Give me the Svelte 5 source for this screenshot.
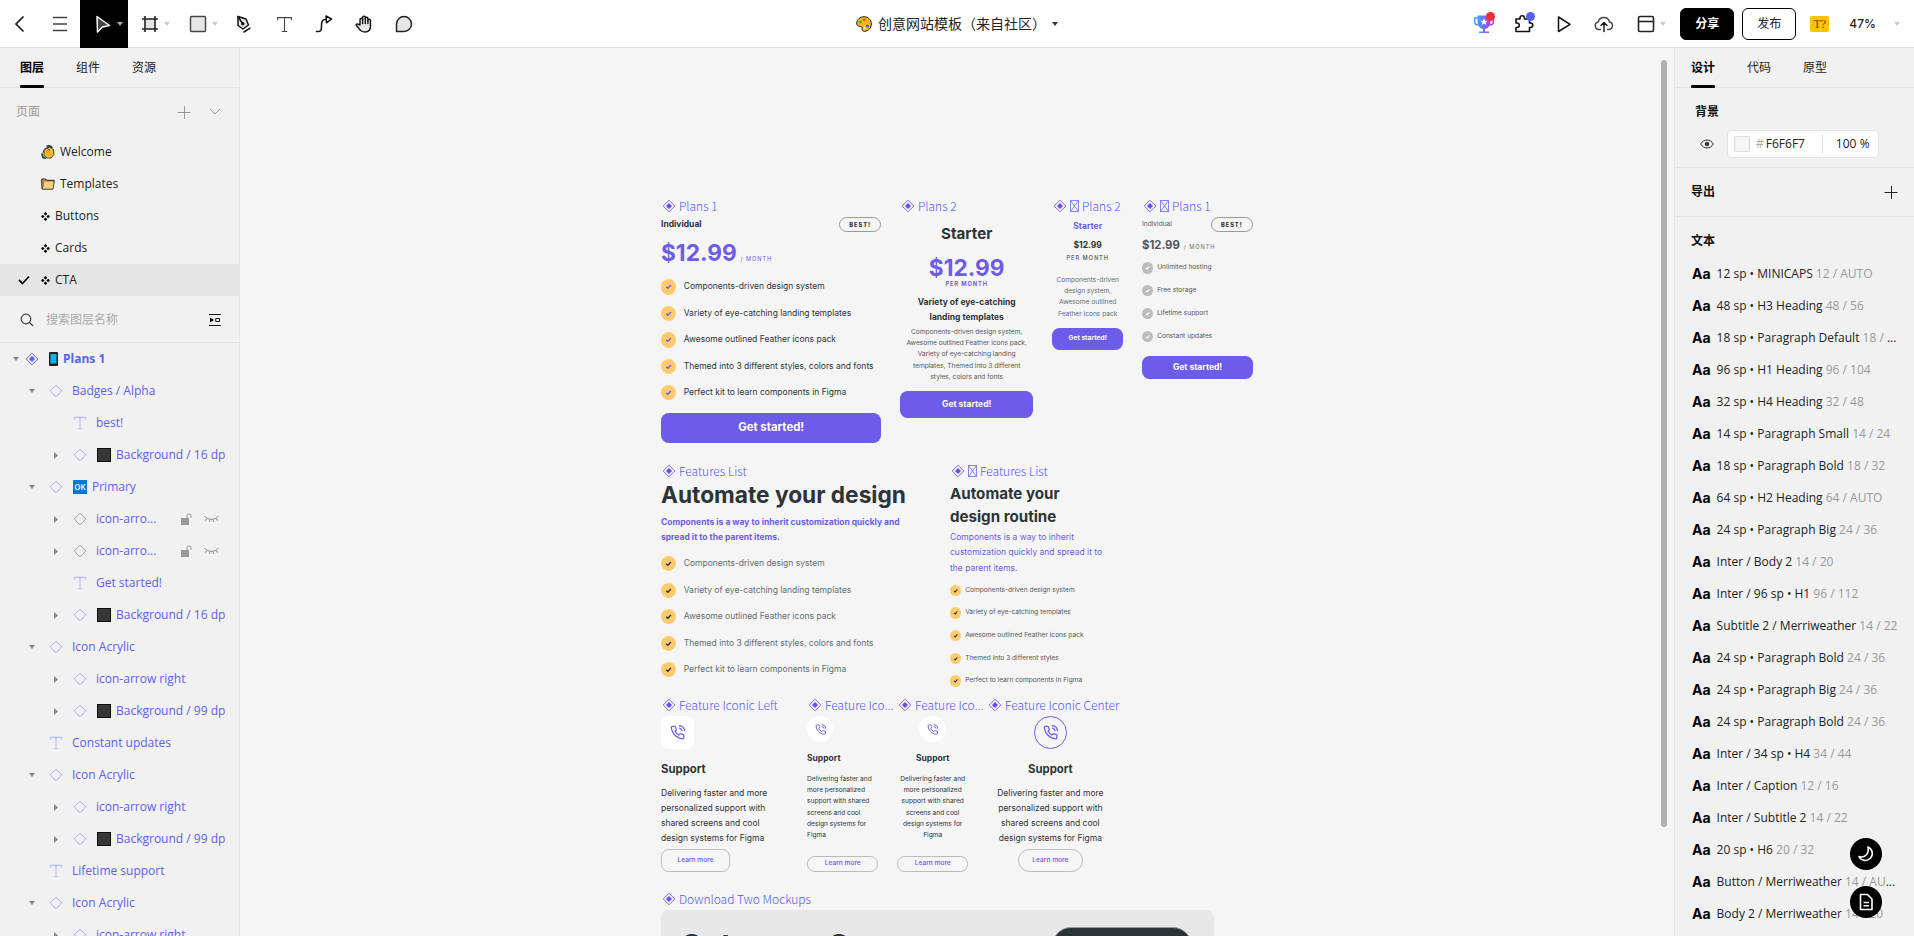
<script>
  const pages = [
    { icon: 'wave', name: 'Welcome' },
    { icon: 'folder', name: 'Templates' },
    { icon: 'four', name: 'Buttons' },
    { icon: 'four', name: 'Cards' },
    { icon: 'four', name: 'CTA', active: true }
  ];

  const acrylic = [
    { level: 1, kind: 'instance', open: true, name: 'Icon Acrylic' },
    { level: 2, kind: 'instance', open: false, name: 'icon-arrow right' },
    { level: 2, kind: 'instance', open: false, badge: 'square', name: 'Background / 99 dp' }
  ];

  const layers = [
    { level: 0, kind: 'component', open: true, badge: 'phone', name: 'Plans 1' },
    { level: 1, kind: 'instance', open: true, name: 'Badges / Alpha' },
    { level: 2, kind: 'text', name: 'best!' },
    { level: 2, kind: 'instance', open: false, badge: 'square', name: 'Background / 16 dp' },
    { level: 1, kind: 'instance', open: true, badge: 'ok', name: 'Primary' },
    { level: 2, kind: 'instance', open: false, name: 'icon-arro...', hidden: true },
    { level: 2, kind: 'instance', open: false, name: 'icon-arro...', hidden: true },
    { level: 2, kind: 'text', name: 'Get started!' },
    { level: 2, kind: 'instance', open: false, badge: 'square', name: 'Background / 16 dp' },
    ...acrylic,
    { level: 1, kind: 'text', name: 'Constant updates' },
    ...acrylic,
    { level: 1, kind: 'text', name: 'Lifetime support' },
    ...acrylic.slice(0, 2)
  ];

  const styles = [
    ['12 sp • MINICAPS', '12 / AUTO'],
    ['48 sp • H3 Heading', '48 / 56'],
    ['18 sp • Paragraph Default', '18 / ', true],
    ['96 sp • H1 Heading', '96 / 104'],
    ['32 sp • H4 Heading', '32 / 48'],
    ['14 sp • Paragraph Small', '14 / 24'],
    ['18 sp • Paragraph Bold', '18 / 32'],
    ['64 sp • H2 Heading', '64 / AUTO'],
    ['24 sp • Paragraph Big', '24 / 36'],
    ['Inter / Body 2', '14 / 20'],
    ['Inter / 96 sp • H1', '96 / 112'],
    ['Subtitle 2 / Merriweather', '14 / 22'],
    ['24 sp • Paragraph Bold', '24 / 36'],
    ['24 sp • Paragraph Big', '24 / 36'],
    ['24 sp • Paragraph Bold', '24 / 36'],
    ['Inter / 34 sp • H4', '34 / 44'],
    ['Inter / Caption', '12 / 16'],
    ['Inter / Subtitle 2', '14 / 22'],
    ['20 sp • H6', '20 / 32'],
    ['Button / Merriweather', '14 / AU', true],
    ['Body 2 / Merriweather', '14 / 20']
  ];

  const features = [
    'Components-driven design system',
    'Variety of eye-catching landing templates',
    'Awesome outlined Feather icons pack',
    'Themed into 3 different styles, colors and fonts',
    'Perfect kit to learn components in Figma'
  ];
  const shortFeatures = [
    'Components-driven design system',
    'Variety of eye-catching templates',
    'Awesome outlined Feather icons pack',
    'Themed into 3 different styles',
    'Perfect to learn components in Figma'
  ];
  const perks = ['Unlimited hosting', 'Free storage', 'Lifetime support', 'Constant updates'];
  const pitch = 'Delivering faster and more personalized support with shared screens and cool design systems for Figma';

  let query = $state('');
  let hex = $state('F6F6F7');
  let opacity = $state('100');
</script>

{#snippet caret(cls)}
  <svg class="caret {cls}" width="6" height="4" viewBox="0 0 6 4" aria-hidden="true"><path d="M0 0h6L3 4z" fill="currentColor" /></svg>
{/snippet}

{#snippet diamond(filled)}
  <svg width="14" height="14" viewBox="0 0 14 14" fill="none" stroke="currentColor" aria-hidden="true">
    <path d="M7 1.2 12.8 7 7 12.8 1.2 7z" stroke-linejoin="round" />
    {#if filled}<path d="M7 4 10 7 7 10 4 7z" fill="currentColor" stroke="none" />{/if}
  </svg>
{/snippet}

{#snippet letterT(size)}
  <svg width={size} height={size} viewBox="0 0 16 16" fill="none" stroke="currentColor" aria-hidden="true">
    <path d="M1.5 4V1.5h13V4M8 1.5v13M5.5 14.5h5" />
  </svg>
{/snippet}

{#snippet label(text, boxed)}
  <div class="label">
    <svg width="14" height="14" viewBox="0 0 14 14" fill="none" stroke="#8a63f0" aria-hidden="true">
      <path d="M7 1.2 12.8 7 7 12.8 1.2 7z" stroke-linejoin="round" />
      <path d="M7 4 10 7 7 10 4 7z" fill="#6b4df0" stroke="none" />
    </svg>
    {#if boxed}
      <svg class="tofu" width="9" height="12" viewBox="0 0 9 12" fill="none" stroke="currentColor" aria-hidden="true"><path d="M.5.5h8v11h-8zM.5.5l8 11M8.5.5l-8 11" stroke-width=".7" /></svg>
    {/if}
    <span>{text}</span>
  </div>
{/snippet}

{#snippet tick()}
  <svg viewBox="0 0 32 32" fill="none" stroke="currentColor" stroke-width="3" aria-hidden="true"><path d="m11 16.500 3.500 3 6.500-7" /></svg>
{/snippet}

{#snippet phone()}
  <svg viewBox="0 0 24 24" fill="none" stroke="currentColor" stroke-width="2" stroke-linecap="round" stroke-linejoin="round" aria-hidden="true">
    <path d="M15.050 5A5 5 0 0 1 19 8.950M15.050 1A9 9 0 0 1 23 8.940m-1 7.980v3a2 2 0 0 1-2.180 2 19.790 19.790 0 0 1-8.630-3.070 19.500 19.500 0 0 1-6-6 19.790 19.790 0 0 1-3.070-8.670A2 2 0 0 1 4.110 2h3a2 2 0 0 1 2 1.720 12.840 12.840 0 0 0 .7 2.810 2 2 0 0 1-.45 2.110L8.090 9.910a16 16 0 0 0 6 6l1.270-1.270a2 2 0 0 1 2.110-.45 12.840 12.840 0 0 0 2.810.7A2 2 0 0 1 22 16.920z" />
  </svg>
{/snippet}

{#snippet checklist(items, cls)}
  <ul class="checks {cls}">
    {#each items as item}
      <li><span class="dot">{@render tick()}</span>{item}</li>
    {/each}
  </ul>
{/snippet}

<div class="app">
  <header class="topbar">
    <div class="tools">
      <button aria-label="返回"><svg width="24" height="24" viewBox="0 0 24 24" fill="none" stroke="#111" stroke-width="1.600"><path d="M15.500 4.500 8 12l7.500 7.500" /></svg></button>
      <button aria-label="菜单"><svg width="24" height="24" viewBox="0 0 24 24" stroke="#444" stroke-width="1.500"><path d="M5 5.500h14M5 12h14M5 18.500h14" /></svg></button>
      <button class="wide on" aria-label="移动">
        <svg width="20" height="20" viewBox="0 0 20 20" fill="#444" stroke="#fff" stroke-width="1.500" stroke-linejoin="round"><path d="m5 2.500 12.500 9-7 1.500-5 5z" /></svg>
        {@render caret('light')}
      </button>
      <button class="wide" aria-label="画框">
        <svg width="18" height="18" viewBox="0 0 18 18" fill="#e6e6e6" stroke="#222" stroke-width="1.600"><path d="M4 4h10v10H4z" stroke="none" /><path d="M4 1v16M14 1v16M1 4h16M1 14h16" /></svg>
        {@render caret('faint')}
      </button>
      <button class="wide" aria-label="矩形">
        <svg width="18" height="18" viewBox="0 0 18 18" fill="#e6e6e6" stroke="#444" stroke-width="1.400"><rect x="1.500" y="1.500" width="15" height="15" rx="1" /></svg>
        {@render caret('faint')}
      </button>
      <button aria-label="钢笔"><svg width="20" height="20" viewBox="0 0 20 20" fill="#e6e6e6" stroke="#111" stroke-width="1.500" stroke-linejoin="round"><path d="m4 2.500 8 2.500 2.500 6-5.500 4-5-3.500z" /><path d="m4 2.500 4.500 7M10 18l6-3.800" fill="none" stroke-linecap="round" /><circle cx="8.800" cy="9.800" r="1" fill="#111" /></svg></button>
      <button aria-label="文本"><span class="dark">{@render letterT(17)}</span></button>
      <button aria-label="连线"><svg width="20" height="20" viewBox="0 0 20 20" fill="none" stroke="#111" stroke-width="1.500" stroke-linejoin="round" stroke-linecap="round"><path d="M2.500 17.500h2c3 0 3-2 3-6 0-4 .5-6 3.500-6h1.500" /><path d="M12 2 17.500 5 12.500 8.800z" fill="#fff" /></svg></button>
      <button aria-label="抓手"><svg width="20" height="20" viewBox="0 0 20 20" fill="#e6e6e6" stroke="#111" stroke-width="1.400" stroke-linejoin="round" stroke-linecap="round"><path d="M6 11V5.500a1.300 1.300 0 0 1 2.600 0V3.500a1.300 1.300 0 0 1 2.700 0v1a1.300 1.300 0 0 1 2.600 0V6.500a1.300 1.300 0 0 1 2.600 0V12c0 4-2.500 6-5.500 6-3.500 0-5-1.500-6.500-4L2.300 11.500c-.6-1.200.8-2 1.800-1.300z" /><path d="M8.600 5.500V9.500M11.300 4.500v5M13.900 6.500v3" /></svg></button>
      <button aria-label="评论"><svg width="20" height="20" viewBox="0 0 20 20" fill="#e6e6e6" stroke="#222" stroke-width="1.500" stroke-linejoin="round"><path d="M2.500 17.500V10A7.500 7.500 0 1 1 10 17.500z" /></svg></button>
    </div>

    <button class="title">
      <svg width="16" height="16" viewBox="0 0 16 16" aria-hidden="true"><path d="M8 .7C12.300.7 15.400 4 15.400 8s-3 7.300-6.800 7.300c-1.600 0-2.800-.8-2.600-2.200.1-1 .5-1.800-.3-2.200C4.500 10.300.6 11 .7 7 .9 3.500 4 .7 8 .7z" fill="#fbb615" stroke="#222" /><circle cx="4.500" cy="6" r="1.300" fill="#16b33d" /><circle cx="8" cy="3.800" r="1.200" fill="#e8362b" /><circle cx="11.500" cy="10" r="1.600" fill="#2b6be8" /><circle cx="8.600" cy="12" r="1.100" fill="#fff" /></svg>
      <span>创意网站模板（来自社区）</span>
      {@render caret('ink')}
    </button>

    <div class="actions">
      <button class="badged red" aria-label="成就"><svg width="22" height="20" viewBox="0 0 22 20"><defs><linearGradient id="cup" x1="0" x2="1"><stop offset="0" stop-color="#3fa2ff" /><stop offset="1" stop-color="#b23cf5" /></linearGradient></defs><path d="M5 4H1.700v4c0 2 1.500 3 3.800 3M17 4h3.300v4c0 2-1.500 3-3.800 3" fill="none" stroke="url(#cup)" stroke-width="1.500" /><path d="M4.500 1.500h13V8c0 4-2.500 6.500-5.500 7v2.500h4V19H6v-1.500h4V15c-3-.5-5.500-3-5.500-7z" fill="url(#cup)" /><path d="m11 4.500 1 2.200 2.400.2-1.800 1.600.6 2.400L11 9.600l-2.200 1.300.6-2.400-1.800-1.600 2.400-.2z" fill="#fff" /></svg></button>
      <button class="badged blue" aria-label="插件"><svg width="20" height="20" viewBox="0 0 20 20" fill="none" stroke="#111" stroke-width="1.600" stroke-linejoin="round"><path d="M2 5h4V4a2 2 0 0 1 4.500 0v1h5v4h1a2 2 0 0 1 0 4.500h-1v4H2v-4h1a2 2 0 0 0 0-4.500H2z" /></svg></button>
      <button aria-label="预览"><svg width="18" height="18" viewBox="0 0 18 18" fill="none" stroke="#111" stroke-width="1.500" stroke-linejoin="round"><path d="M3.500 2v14.500l11.500-7.200z" /></svg></button>
      <button aria-label="上传"><svg width="20" height="20" viewBox="0 0 20 20" fill="none" stroke="#444" stroke-width="1.400" stroke-linecap="round" stroke-linejoin="round"><path d="M6.500 15.500H5A3.800 3.800 0 0 1 4.200 8 5.800 5.800 0 0 1 15.500 8a3.800 3.800 0 0 1-.5 7.500h-1.500" /><path d="M10 17.500V9M7 11.500 10 8.500l3 3" stroke="#111" /></svg></button>
      <button class="wide" aria-label="布局">
        <svg width="18" height="18" viewBox="0 0 18 18" fill="none" stroke="#222" stroke-width="1.600"><rect x="1.500" y="1.500" width="15" height="15" rx="1.500" /><path d="M1.500 6.500h15" /></svg>
        {@render caret('faint')}
      </button>
      <button class="pill solid">分享</button>
      <button class="pill">发布</button>
      <button class="missing" aria-label="缺失字体">T?</button>
      <button class="zoom"><span>47%</span>{@render caret('faint')}</button>
    </div>
  </header>

  <div class="body">
    <aside class="left">
      <nav class="tabs">
        <button class="on">图层</button><button>组件</button><button>资源</button>
      </nav>
      <div class="pages-head">
        <span>页面</span>
        <button aria-label="新建页面"><svg width="14" height="14" viewBox="0 0 14 14" stroke="#999"><path d="M.5 7.500h13M7.500 1v13" /></svg></button>
        <button aria-label="收起"><svg width="12" height="8" viewBox="0 0 12 8" fill="none" stroke="#999"><path d="m1 1 5 5 5-5" /></svg></button>
      </div>
      <ul class="pages">
        {#each pages as page}
          <li>
            <button class:active={page.active}>
              <span class="mark">
                {#if page.active}<svg width="12" height="10" viewBox="0 0 12 10" fill="none" stroke="#111" stroke-width="1.800"><path d="m1 5 3.500 3.500L11 1.500" /></svg>{/if}
              </span>
              {#if page.icon === 'wave'}
                <svg width="14" height="14" viewBox="0 0 14 14"><path d="M3 5.500 5.500 3 9 2l3.500 2.500.5 5-3 3.500H6L3 10.500z" fill="#fbb829" stroke="#222" stroke-width=".8" /><path d="M.8 8.500 2 12.500l3 .8M5.500 1.500 8.500.8l3 2" fill="none" stroke="#17494f" stroke-width="1.800" /><path d="M1.800 8 3.500 4 6 3l3 2.500" fill="none" stroke="#333" stroke-width=".9" /><path d="m4.500 6 3.500 3.500M6 5l3.500 3.500" stroke="#c77e12" stroke-width=".7" /></svg>
              {:else if page.icon === 'folder'}
                <svg width="14" height="12" viewBox="0 0 14 12"><path d="M.7 1h4l1 1.300h7.500L12 11H1z" fill="#e8a33b" stroke="#222" /><path d="M3 3h10l-1 8H1.500z" fill="#fcd077" stroke="#444" stroke-width=".6" /></svg>
              {:else}
                <svg width="9" height="9" viewBox="0 0 9 9"><path d="M4.500 0 6.300 1.800 4.500 3.600 2.700 1.800zM4.500 5.400 6.300 7.200 4.500 9 2.700 7.200zM1.800 2.700 3.600 4.500 1.800 6.300 0 4.500zM7.200 2.700 9 4.500 7.200 6.300 5.400 4.500z" /></svg>
              {/if}
              <span>{page.name}</span>
            </button>
          </li>
        {/each}
      </ul>
      <div class="search">
        <svg width="14" height="14" viewBox="0 0 14 14" fill="none" stroke="#444" stroke-width="1.200"><circle cx="6" cy="6" r="4.800" /><path d="m9.500 9.500 3.500 3.500" /></svg>
        <input aria-label="搜索图层名称" placeholder="搜索图层名称" bind:value={query} />
        <button aria-label="收起图层"><svg width="12" height="12" viewBox="0 0 12 12"><path d="M0 .5h12M0 11.500h12" stroke="#111" /><path d="M1 3.500 5 6 1 8.500z" /><path d="M6.700 4.500h3.800v3H6.700z" fill="none" stroke="#111" /></svg></button>
      </div>
      <ul class="tree">
        {#each layers as layer}
          <li class="l{layer.level}">
            <span class="toggle">
              {#if layer.open === true}{@render caret('grey')}
              {:else if layer.open === false}<svg width="4" height="7" viewBox="0 0 4 7"><path d="M0 0v7l4-3.500z" fill="#888" /></svg>{/if}
            </span>
            <span class="kind" class:off={layer.hidden} class:main={layer.kind === 'component'}>
              {#if layer.kind === 'text'}{@render letterT(14)}{:else}{@render diamond(layer.kind === 'component')}{/if}
            </span>
            {#if layer.badge === 'phone'}
              <svg class="badge" width="9" height="14" viewBox="0 0 9 14"><rect width="9" height="14" rx="1" fill="#222" /><path d="M1.500 2h6v9.500h-6z" fill="#0fb5f0" /></svg>
            {:else if layer.badge === 'square'}
              <svg class="badge" width="14" height="14" viewBox="0 0 14 14"><rect x=".5" y=".5" width="13" height="13" fill="#383838" stroke="#111" /></svg>
            {:else if layer.badge === 'ok'}
              <span class="badge ok">OK</span>
            {/if}
            <span class="name">{layer.name}</span>
            {#if layer.hidden}
              <button class="lock" aria-label="解锁"><svg width="11" height="12" viewBox="0 0 11 12"><path d="M0 5h8v7H0z" fill="#999" /><path d="M6 5V3a2 2 0 0 1 4 0v2" fill="none" stroke="#999" /></svg></button>
              <button aria-label="显示"><svg width="15" height="8" viewBox="0 0 15 8" fill="none" stroke="#888"><path d="M.5 1c3.500 4.500 10.500 4.500 14 0M3.500 3.500 1 5.500M11.500 3.500 14 5.500M6 4.500 5.500 7M9 4.500 9.500 7" /></svg></button>
            {/if}
          </li>
        {/each}
      </ul>
    </aside>

    <main class="canvas">
      <section class="frame plan-a">
        {@render label('Plans 1')}
        <div class="art">
          <div class="split"><h3 class="t18">Individual</h3><span class="best">BEST!</span></div>
          <p class="price"><b class="t48">$12.99</b><span class="caps thin">/ MONTH</span></p>
          {@render checklist(features, 'brand')}
          <button class="cta t24">Get started!</button>
        </div>
      </section>

      <section class="frame plan-b">
        {@render label('Plans 2')}
        <div class="art center">
          <h2 class="t32">Starter</h2>
          <b class="t48 brandy">$12.99</b>
          <span class="caps bold">PER MONTH</span>
          <h4 class="t18">Variety of eye-catching landing templates</h4>
          <p class="t14">Components-driven design system, Awesome outlined Feather icons pack, Variety of eye-catching landing templates, Themed into 3 different styles, colors and fonts</p>
          <button class="cta t18">Get started!</button>
        </div>
      </section>

      <section class="frame plan-c">
        {@render label('Plans 2', true)}
        <div class="art center">
          <h3 class="t18 brandy">Starter</h3>
          <b class="t18">$12.99</b>
          <span class="caps">PER MONTH</span>
          <p class="t14">Components-driven design system, Awesome outlined Feather icons pack</p>
          <button class="cta small t14">Get started!</button>
        </div>
      </section>

      <section class="frame plan-d">
        {@render label('Plans 1', true)}
        <div class="art">
          <div class="split"><span class="t14">Individual</span><span class="best">BEST!</span></div>
          <p class="price"><b class="t24">$12.99</b><span class="caps">/ MONTH</span></p>
          {@render checklist(perks, 'compact grey')}
          <button class="cta small t18">Get started!</button>
        </div>
      </section>

      <section class="frame list-a">
        {@render label('Features List')}
        <div class="art">
          <h2 class="t48">Automate your design</h2>
          <p class="t18 lead strong">Components is a way to inherit customization quickly and spread it to the parent items.</p>
          {@render checklist(features, 'soft')}
        </div>
      </section>

      <section class="frame list-b">
        {@render label('Features List', true)}
        <div class="art">
          <h2 class="t32">Automate your design routine</h2>
          <p class="t18 lead">Components is a way to inherit customization quickly and spread it to the parent items.</p>
          {@render checklist(shortFeatures, 'compact')}
        </div>
      </section>

      <section class="frame icon-a">
        {@render label('Feature Iconic Left')}
        <div class="art">
          <span class="glyph large">{@render phone()}</span>
          <h3 class="t24">Support</h3>
          <p class="t18">{pitch}</p>
          <button class="ghost">Learn more</button>
        </div>
      </section>

      <section class="frame icon-b">
        {@render label('Feature Ico...')}
        <div class="art">
          <span class="glyph">{@render phone()}</span>
          <h3 class="t18">Support</h3>
          <p class="t14">{pitch}</p>
          <button class="ghost slim">Learn more</button>
        </div>
      </section>

      <section class="frame icon-c">
        {@render label('Feature Ico...')}
        <div class="art center">
          <span class="glyph">{@render phone()}</span>
          <h3 class="t18">Support</h3>
          <p class="t14">{pitch}</p>
          <button class="ghost slim">Learn more</button>
        </div>
      </section>

      <section class="frame icon-d">
        {@render label('Feature Iconic Center')}
        <div class="art center">
          <span class="glyph large ring">{@render phone()}</span>
          <h3 class="t24">Support</h3>
          <p class="t18">{pitch}</p>
          <button class="ghost round">Learn more</button>
        </div>
      </section>

      <section class="frame mockups">
        {@render label('Download Two Mockups')}
        <div class="art banner">
          <h2 class="t64">Get some Games</h2>
          <div class="device"></div>
        </div>
      </section>

      <div class="scrollbar"></div>
    </main>

    <aside class="right">
      <nav class="tabs">
        <button class="on">设计</button><button>代码</button><button>原型</button>
      </nav>
      <section class="fill">
        <h5>背景</h5>
        <div class="fill-row">
          <button aria-label="可见性"><svg width="14" height="10" viewBox="0 0 14 10" fill="none" stroke="#333"><path d="M.6 5C3.500-.3 10.500-.3 13.400 5 10.500 10.300 3.500 10.300.6 5z" /><circle cx="7" cy="5" r="1.800" fill="#333" /></svg></button>
          <div class="field">
            <span class="swatch"></span>
            <span class="hash">#</span>
            <input class="hex" aria-label="颜色" bind:value={hex} />
            <input class="alpha" aria-label="不透明度" bind:value={opacity} />
            <span>%</span>
          </div>
        </div>
      </section>
      <section class="export">
        <h5>导出</h5>
        <button aria-label="添加导出"><svg width="14" height="14" viewBox="0 0 14 14" stroke="#222"><path d="M.5 7.500h13M7.500 1v13" /></svg></button>
      </section>
      <section class="texts">
        <h5>文本</h5>
        <ul>
          {#each styles as [name, size, clipped]}
            <li><b>Aa</b><span class="line">{name} <i>{size}</i>{#if clipped}...{/if}</span></li>
          {/each}
        </ul>
      </section>
    </aside>
  </div>

  <div class="floating">
    <button aria-label="深色模式"><svg width="18" height="18" viewBox="0 0 18 18" fill="none" stroke="#fff" stroke-width="1.600" stroke-linejoin="round"><path d="M11 2a7 7 0 1 1-9 9.500C7.500 13.500 12.500 8.500 11 2z" /></svg></button>
    <button aria-label="文档"><svg width="18" height="18" viewBox="0 0 18 18" fill="none" stroke="#fff" stroke-width="1.600" stroke-linejoin="round"><path d="M3.500 1.500h7l4.500 4.500v10.500H3.500zM6.500 9.500h5.500M6.500 12.800h5.500" /></svg></button>
  </div>
</div>

<style>
  :global(body) { margin: 0; }
  .app {
    --ui: 'Open Sans', 'Noto Sans CJK SC', sans-serif;
    --line: #e4e4e4;
    --link: #5b60f5;
    --brand: #6c5ce7;
    --ink: #2d3436;
    height: 100vh;
    display: flex;
    flex-direction: column;
    overflow: hidden;
    font: 12px/20px var(--ui);
    color: #222;
    background: #f5f5f5;
  }
  button, input { font: inherit; color: inherit; border: 0; padding: 0; background: none; }
  ul { list-style: none; margin: 0; padding: 0; }
  h2, h3, h4, h5, p { margin: 0; font-size: inherit; }
  svg { display: block; flex: none; }

  .topbar {
    display: grid;
    grid-template-columns: 1fr auto 1fr;
    align-items: center;
    height: 48px;
    flex: none;
    background: #fff;
    border-bottom: 1px solid #dedede;
    box-sizing: border-box;
  }
  .tools, .actions { display: flex; align-items: center; }
  .actions { justify-content: flex-end; }
  .tools > button, .actions > button:not(.pill, .missing, .zoom) {
    width: 40px;
    height: 48px;
    display: flex;
    align-items: center;
    justify-content: center;
    position: relative;
  }
  .tools > button.wide, .actions > button.wide { width: 48px; gap: 5px; padding-left: 6px; box-sizing: border-box; }
  .tools > button.on { background: #000; }
  .dark { color: #444; }
  .caret.light { color: #aaa; }
  .caret.faint { color: #ccc; }
  .caret.ink { color: #333; }
  .caret.grey { color: #888; }
  .title { display: flex; align-items: center; gap: 6px; font-size: 14px; }
  .badged::after {
    content: '';
    position: absolute;
    top: 12px;
    right: 9px;
    width: 9px;
    height: 9px;
    border-radius: 50%;
    background: #f52b36;
  }
  .badged.blue::after { background: #5560ff; }
  .pill {
    width: 54px;
    height: 32px;
    margin-left: 8px;
    border: 1px solid #000;
    border-radius: 6px;
  }
  .pill.solid { background: #000; color: #fff; font-weight: 700; }
  .missing {
    width: 19px;
    height: 16px;
    margin: 0 20px 0 14px;
    border-radius: 2px;
    background: #ffc300;
    color: #5b4600;
    font: 12px/16px 'Liberation Serif', serif;
  }
  .zoom { display: flex; align-items: center; gap: 18px; padding-right: 14px; font: 500 12px/16px Inter, sans-serif; }

  .body { flex: 1; min-height: 0; display: flex; }
  aside { width: 240px; flex: none; box-sizing: border-box; background: #f1f1f1; overflow: hidden; }
  .left { border-right: 1px solid var(--line); }
  .right { border-left: 1px solid var(--line); }
  .tabs { display: flex; gap: 32px; height: 40px; box-sizing: border-box; padding: 0 20px; border-bottom: 1px solid var(--line); }
  .right .tabs { padding: 0 16px; }
  .tabs button { position: relative; }
  .tabs .on { font-weight: 700; color: #000; }
  .tabs .on::after { content: ''; position: absolute; left: 0; right: 0; bottom: -1px; height: 3px; border-radius: 1px; background: #000; }

  .pages-head { display: flex; align-items: center; height: 48px; padding: 0 18px 0 16px; color: #999; gap: 18px; }
  .pages-head span { flex: 1; }
  .pages button { display: flex; align-items: center; gap: 5px; width: 100%; height: 32px; padding: 0 16px 0 18px; }
  .pages .active { background: #e5e5e5; }
  .mark { width: 18px; flex: none; }
  .search { display: flex; align-items: center; gap: 12px; height: 44px; padding: 2px 18px 0 20px; border-bottom: 1px solid var(--line); }
  .search input { flex: 1; min-width: 0; outline: 0; }
  .search input::placeholder { color: #aaa; opacity: 1; }

  .tree li { display: flex; align-items: center; height: 32px; color: var(--link); padding-right: 8px; white-space: nowrap; }
  .l0 { padding-left: 12px; font-weight: 700; }
  .l1 { padding-left: 20px; }
  .l2 { padding-left: 44px; }
  .toggle, .kind { width: 24px; flex: none; display: flex; justify-content: center; }
  .l0 .toggle { width: 8px; }
  .kind { margin-right: 4px; color: #a9acf8; }
  .kind.main { color: var(--link); }
  .kind.off { color: #999; }
  .badge { margin: 0 5px 0 1px; flex: none; }
  .ok { width: 14px; height: 14px; background: #0078d7; color: #fff; font: 600 8px/14px var(--ui); text-align: center; }
  .tree li:has(button) { padding-right: 20px; }
  .tree li button { margin-left: 12px; flex: none; }
  .tree li .lock { margin-left: auto; }

  .canvas { flex: 1; min-width: 0; position: relative; overflow: hidden; background: #f5f5f5; }
  .scrollbar { position: absolute; right: 7px; top: 12px; width: 6px; height: 767px; border-radius: 3px; background: #b0b0b0; }
  .frame { position: absolute; }
  .label {
    display: flex;
    align-items: center;
    height: 20px;
    margin-bottom: 1px;
    padding-left: 1px;
    gap: 3px;
    color: #5357fa;
    font: 300 12px/20px 'Noto Sans CJK SC', sans-serif;
    white-space: nowrap;
  }
  .plan-a { left: 421px; top: 148px; }
  .plan-b { left: 660px; top: 148px; }
  .plan-c { left: 812px; top: 148px; }
  .plan-d { left: 902px; top: 148px; }
  .list-a { left: 421px; top: 413px; }
  .list-b { left: 710px; top: 413px; }
  .icon-a { left: 421px; top: 647px; }
  .icon-b { left: 567px; top: 647px; }
  .icon-c { left: 657px; top: 647px; }
  .icon-d { left: 747px; top: 647px; }
  .mockups { left: 421px; top: 841px; }

  /* Artwork is laid out at design size and shown at the canvas zoom level. */
  .art {
    zoom: 0.473;
    display: flex;
    flex-direction: column;
    align-items: flex-start;
    font: 14px/24px Inter, sans-serif;
    color: var(--ink);
  }
  .center { align-items: center; text-align: center; }
  .t14 { font-size: 14px; line-height: 24px; }
  .t18 { font-size: 18px; line-height: 32px; }
  .t24 { font-size: 24px; line-height: 32px; }
  .t32 { font-size: 32px; line-height: 48px; }
  .t48 { font-size: 48px; line-height: 56px; }
  .t64 { font-size: 64px; line-height: 80px; }
  .caps { font-size: 12px; line-height: 16px; letter-spacing: 2px; color: #636e72; }
  .caps.thin { color: var(--brand); }
  .caps.bold { color: var(--brand); font-weight: 700; }
  .brandy { color: var(--brand); }
  .split { display: flex; justify-content: space-between; align-items: center; align-self: stretch; height: 32px; }
  .best {
    width: 90px;
    height: 32px;
    box-sizing: border-box;
    border: 1px solid #999;
    border-radius: 16px;
    font: 800 12px/30px Inter, sans-serif;
    letter-spacing: 2px;
    text-align: center;
  }
  .price { display: flex; align-items: baseline; gap: 8px; }
  .cta { align-self: stretch; height: 64px; border-radius: 16px; background: var(--brand); color: #fff; font-weight: 700; }
  .checks { display: flex; flex-direction: column; gap: 24px; font-size: 18px; line-height: 32px; white-space: nowrap; }
  .checks li { display: flex; gap: 16px; }
  .dot { width: 32px; height: 32px; border-radius: 50%; background: #fdcb6e; color: var(--ink); }
  .brand .dot { color: var(--brand); }
  .soft { color: #636e72; }
  .compact { font-size: 14px; line-height: 24px; color: #555; }
  .compact li { gap: 8px; }
  .compact .dot { width: 24px; height: 24px; }
  .grey .dot { background: #bdbdbd; color: #fff; }

  .plan-a .art { width: 466px; }
  .plan-a .price { margin-top: 16px; color: var(--brand); }
  .plan-a .checks { margin-top: 28px; }
  .plan-a .cta { margin-top: 26px; }

  .plan-b .art { width: 282px; padding-top: 13px; }
  .plan-b b { margin-top: 19px; }
  .plan-b h4 { margin-top: 13px; width: 260px; }
  .plan-b p { margin-top: 3px; width: 268px; color: #555; }
  .plan-b .cta { margin-top: 16px; height: 56px; }

  .plan-c .art { width: 151px; padding-top: 5px; }
  .plan-c b { margin-top: 8px; }
  .plan-c .caps { margin-top: 4px; font-weight: 600; }
  .plan-c p { margin-top: 25px; color: #636e72; }
  .cta.small { height: 48px; }
  .plan-c .cta { margin-top: 16px; }

  .plan-d .art { width: 235px; color: #555; }
  .plan-d .best { color: var(--ink); }
  .plan-d .price { margin-top: 12px; }
  .plan-d .checks { margin-top: 20px; }
  .plan-d .cta { margin-top: 30px; }

  .lead { color: var(--brand); }
  .strong { font-weight: 700; }
  .list-a .art { width: 540px; }
  .list-a .lead { margin-top: 13px; }
  .list-a .checks { margin-top: 24px; }
  .list-b .art { width: 336px; padding-top: 2px; }
  .list-b h2 { width: 260px; }
  .list-b .lead { margin-top: 4px; }
  .list-b .checks { margin-top: 19px; }

  .glyph { width: 56px; height: 56px; border-radius: 50%; background: #fff; color: var(--brand); display: grid; place-items: center; }
  .glyph :global(svg) { width: 24px; height: 24px; }
  .glyph.large { width: 70px; height: 70px; border-radius: 16px; }
  .glyph.large :global(svg) { width: 32px; height: 32px; }
  .glyph.ring { border-radius: 50%; border: 1px solid var(--brand); background: none; box-sizing: border-box; }
  .ghost {
    box-sizing: border-box;
    width: 146px;
    height: 48px;
    border: 1px solid #bbb;
    border-radius: 16px;
    color: var(--brand);
    font-size: 14px;
    font-weight: 500;
  }
  .ghost.slim { width: 151px; height: 33px; }
  .ghost.round { width: 138px; border-radius: 24px; }
  .icon-a h3, .icon-d h3 { margin-top: 28px; }
  .icon-a p, .icon-d p { margin-top: 18px; width: 240px; }
  .icon-a .ghost, .icon-d .ghost { margin-top: 6px; }
  .icon-d .art { width: 268px; }
  .icon-b .art, .icon-c .art { width: 151px; }
  .icon-b h3, .icon-c h3 { margin-top: 18px; }
  .icon-b p, .icon-c p { margin-top: 16px; }
  .icon-b .ghost, .icon-c .ghost { margin-top: 30px; }

  .banner {
    flex-direction: row;
    justify-content: space-between;
    width: 1170px;
    height: 400px;
    box-sizing: border-box;
    padding: 36px 48px 0 40px;
    border-radius: 16px;
    background: #e8e8e8;
    overflow: hidden;
  }
  .device {
    width: 296px;
    height: 500px;
    box-sizing: border-box;
    border: 4px solid #999;
    border-radius: 40px;
    background: var(--ink);
  }

  .right h5 { font-weight: 700; color: #111; }
  .fill { box-sizing: border-box; height: 80px; padding: 14px 16px 0 20px; border-bottom: 1px solid var(--line); }
  .fill-row { display: flex; align-items: center; gap: 13px; margin-top: 8px; padding-left: 5px; }
  .field {
    display: flex;
    align-items: center;
    width: 152px;
    height: 28px;
    box-sizing: border-box;
    padding-left: 6px;
    border: 1px solid #e4e4e4;
    border-radius: 5px;
    background: #fff;
  }
  .swatch { width: 16px; height: 16px; box-sizing: border-box; border: 1px solid #ddd; border-radius: 2px; background: #f5f5f5; }
  .hash { margin: 0 2px 0 6px; color: #aaa; }
  .hex { width: 56px; border-right: 1px solid #e4e4e4; }
  .alpha { width: 23px; margin: 0 1px 0 13px; }
  .export { display: flex; align-items: center; justify-content: space-between; height: 48px; padding: 0 16px; border-bottom: 1px solid var(--line); }
  .texts h5 { height: 41px; padding: 4px 16px 0; line-height: 40px; box-sizing: border-box; }
  .texts li { display: flex; align-items: center; height: 32px; gap: 6px; padding: 0 8px 0 17px; }
  .texts b { font: 700 14px/20px Inter, sans-serif; color: #000; }
  .line { white-space: nowrap; }
  .line i { font-style: normal; color: #999; }

  .floating { position: fixed; right: 32px; bottom: 18px; display: flex; flex-direction: column; gap: 16px; }
  .floating button { width: 32px; height: 32px; border-radius: 50%; background: #000; display: grid; place-items: center; }
</style>
